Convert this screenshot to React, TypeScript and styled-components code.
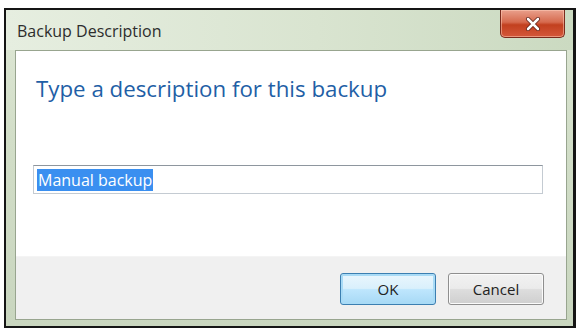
import React from "react";
import styled, { createGlobalStyle } from "styled-components";

const Global = createGlobalStyle`
  html, body { margin: 0; padding: 0; background: #ffffff; }
  body { width: 576px; height: 328px; overflow: hidden; }
`;

const Page = styled.div`
  width: 576px;
  height: 328px;
  box-sizing: border-box;
  padding: 8px 0 0 4px;
  background: #ffffff;
  font-family: "Open Sans", "Noto Sans", sans-serif;
`;

const Window = styled.div`
  width: 572px;
  height: 320px;
  box-sizing: border-box;
  border: 2px solid #151515;
  border-right-width: 3px;
  background: linear-gradient(180deg, #dfe8d6 0%, #d2dec8 40%, #c9d6bf 100%);
  display: flex;
  flex-direction: column;
`;

const TitleBar = styled.div`
  height: 40px;
  flex: none;
  display: flex;
  align-items: flex-start;
  justify-content: space-between;
  padding: 0 8px 0 11px;
  background: linear-gradient(90deg, #e6eee0 0%, #d9e4d0 55%, #cbdac1 100%);
`;

const Title = styled.div`
  margin-top: 10px;
  font-size: 16px;
  color: #2d2d2d;
`;

const CloseButton = styled.div`
  width: 65px;
  height: 28px;
  box-sizing: border-box;
  border: 1px solid #7a2a1c;
  border-top: none;
  border-radius: 0 0 5px 5px;
  background: linear-gradient(180deg, #e9a08c 0%, #d66a4e 45%, #c2401f 55%, #d4573a 100%);
  box-shadow: inset 0 0 0 1px rgba(255, 210, 190, 0.5);
  display: flex;
  align-items: center;
  justify-content: center;
`;

const Client = styled.div`
  flex: 1;
  margin: 0 6px 6px 9px;
  box-sizing: border-box;
  border: 1px solid #98a58f;
  background: #ffffff;
  display: flex;
  flex-direction: column;
`;

const Content = styled.div`
  flex: 1;
  padding: 23px 22px 0 17px;
  display: flex;
  flex-direction: column;
`;

const Heading = styled.div`
  padding-left: 3px;
  font-size: 22.3px;
  color: #1f5fa6;
  line-height: 30px;
`;

const Input = styled.div`
  margin-top: 61px;
  width: 510px;
  height: 29px;
  box-sizing: border-box;
  border: 1px solid #c4cbd2;
  border-top-color: #8e969e;
  background: #ffffff;
  display: flex;
  align-items: center;
  padding-left: 3px;
`;

const Selected = styled.span`
  background: #3a8ff0;
  color: #ffffff;
  font-size: 16px;
  line-height: 22px;
  padding: 0 1px;
`;

const Footer = styled.div`
  height: 63px;
  flex: none;
  background: #f0f0f0;
  border-top: 1px solid #f4f4f4;
  display: flex;
  justify-content: flex-end;
  align-items: flex-start;
  gap: 12px;
  padding: 16px 22px 0 0;
  box-sizing: border-box;
`;

const Button = styled.div<{ $default?: boolean }>`
  width: 96px;
  height: 32px;
  box-sizing: border-box;
  border-radius: 3px;
  border: 1px solid ${(p) => (p.$default ? "#3c7fb1" : "#8f8f8f")};
  box-shadow: ${(p) =>
    p.$default ? "inset 0 0 0 2px #a9dbf6" : "inset 0 0 0 1px #fbfbfb"};
  background: ${(p) =>
    p.$default
      ? "linear-gradient(180deg, #eaf6fd 0%, #d9f0fc 48%, #bee6fd 52%, #a7d9f5 100%)"
      : "linear-gradient(180deg, #f2f2f2 0%, #ebebeb 48%, #dddddd 52%, #cfcfcf 100%)"};
  display: flex;
  align-items: center;
  justify-content: center;
  font-size: 15px;
  color: #222;
`;

export default function App() {
  return (
    <>
      <Global />
      <Page>
        <Window>
          <TitleBar>
            <Title>Backup Description</Title>
            <CloseButton>
              <svg width="16" height="14" viewBox="0 0 16 14">
                <path d="M3 2 L13 12 M13 2 L3 12" stroke="#5a1a10" strokeWidth="4" strokeLinecap="round" />
                <path d="M3 2 L13 12 M13 2 L3 12" stroke="#ffffff" strokeWidth="2.6" strokeLinecap="round" />
              </svg>
            </CloseButton>
          </TitleBar>
          <Client>
            <Content>
              <Heading>Type a description for this backup</Heading>
              <Input>
                <Selected>Manual backup</Selected>
              </Input>
            </Content>
            <Footer>
              <Button $default>OK</Button>
              <Button>Cancel</Button>
            </Footer>
          </Client>
        </Window>
      </Page>
    </>
  );
}
